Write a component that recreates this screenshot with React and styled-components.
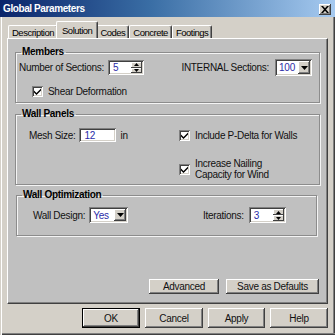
import React from "react";
import styled, { createGlobalStyle } from "styled-components";

const GlobalStyle = createGlobalStyle`
  html, body {
    margin: 0;
    padding: 0;
    background: #d4d0c8;
  }
  * {
    box-sizing: border-box;
  }
`;

const sunken = `
  box-shadow: inset 1px 1px #808080, inset -1px -1px #ffffff,
    inset 2px 2px #404040, inset -2px -2px #d4d0c8;
`;

const raised = `
  box-shadow: inset -1px -1px #404040, inset 1px 1px #ffffff,
    inset -2px -2px #808080, inset 2px 2px #d4d0c8;
`;

function App() {
  return (
    <Window>
      <GlobalStyle />
      <TitleBar>
        <h1>Global Parameters</h1>
        <CloseButton>
          <svg width="8" height="7" viewBox="0 0 8 7">
            <path d="M0 0h2l2 2.3L6 0h2L5 3.5 8 7H6L4 4.7 2 7H0l3-3.5z" fill="#000" />
          </svg>
        </CloseButton>
      </TitleBar>

      <Body>
        <TabStrip>
          <Tab>Description</Tab>
          <Tab $active>Solution</Tab>
          <Tab>Codes</Tab>
          <Tab>Concrete</Tab>
          <Tab>Footings</Tab>
        </TabStrip>

        <Panel>
          <Group $height={57}>
            <legend>Members</legend>
            <MembersRow>
              <Field>
                <Label>Number of Sections:</Label>
                <Spinner value="5" width={36} />
              </Field>
              <Field $gap={6}>
                <Label>INTERNAL Sections:</Label>
                <Combo value="100" width={37} height={17} />
              </Field>
            </MembersRow>
            <CheckRow $indent={13}>
              <CheckBox />
              <Label>Shear Deformation</Label>
            </CheckRow>
          </Group>

          <Group $height={77} $top={5}>
            <legend>Wall Panels</legend>
            <PanelsGrid>
              <Field>
                <Label>Mesh Size:</Label>
                <TextInput>12</TextInput>
                <Label>in</Label>
              </Field>
              <CheckList>
                <CheckRow>
                  <CheckBox />
                  <Label>Include P-Delta for Walls</Label>
                </CheckRow>
                <CheckRow>
                  <CheckBox />
                  <Label>
                    Increase Nailing
                    <br />
                    Capacity for Wind
                  </Label>
                </CheckRow>
              </CheckList>
            </PanelsGrid>
          </Group>

          <Group $height={47} $top={4} $right={3} $left={1}>
            <legend>Wall Optimization</legend>
            <OptGrid>
              <Field $gap={4}>
                <Label>Wall Design:</Label>
                <Combo value="Yes" width={39} height={16} />
              </Field>
              <Field $gap={5}>
                <Label>Iterations:</Label>
                <Spinner value="3" width={37} height={16} />
              </Field>
            </OptGrid>
          </Group>

          <PanelButtons>
            <Button $width={70} $height={15}>Advanced</Button>
            <Button $width={93} $height={15}>Save as Defaults</Button>
          </PanelButtons>
        </Panel>

        <DialogButtons>
          <Button $width={58} $height={20} $default>OK</Button>
          <Button $width={58} $height={20}>Cancel</Button>
          <Button $width={57} $height={20}>Apply</Button>
          <Button $width={58} $height={20}>Help</Button>
        </DialogButtons>
      </Body>
    </Window>
  );
}

function Spinner({ value, width, height = 15 }) {
  return (
    <SpinBox style={{ width, height }}>
      <span>{value}</span>
      <SpinButtons>
        <SpinArrow>
          <svg width="5" height="3" viewBox="0 0 5 3">
            <path d="M2.5 0L5 3H0z" fill="#000" />
          </svg>
        </SpinArrow>
        <SpinArrow>
          <svg width="5" height="3" viewBox="0 0 5 3">
            <path d="M0 0h5L2.5 3z" fill="#000" />
          </svg>
        </SpinArrow>
      </SpinButtons>
    </SpinBox>
  );
}

function Combo({ value, width, height }) {
  return (
    <ComboBox style={{ width, height }}>
      <span>{value}</span>
      <DropButton>
        <svg width="7" height="4" viewBox="0 0 7 4">
          <path d="M0 0h7L3.5 4z" fill="#000" />
        </svg>
      </DropButton>
    </ComboBox>
  );
}

function CheckBox() {
  return (
    <Check>
      <svg width="7" height="7" viewBox="0 0 7 7">
        <path d="M0 2.5l2.5 2.5L7 0.5v2L2.5 7 0 4.5z" fill="#000" />
      </svg>
    </Check>
  );
}

const Window = styled.div`
  width: 335px;
  height: 335px;
  display: flex;
  flex-direction: column;
  background: #d4d0c8;
  font-family: "Liberation Sans", Arial, sans-serif;
  color: #000;
  overflow: hidden;
  box-shadow: inset 1px 0 #d4d0c8, inset 2px 0 #ffffff, inset 0 -1px #404040,
    inset 0 -2px #808080, inset -1px 0 #404040, inset -2px 0 #808080;
`;

const TitleBar = styled.div`
  height: 17px;
  flex: none;
  display: flex;
  align-items: center;
  justify-content: space-between;
  padding: 0 4px 0 3px;
  background: linear-gradient(90deg, #0a246a 0%, #3a6ea5 45%, #a6caf0 100%);

  h1 {
    margin: 0;
    font-size: 10px;
    font-weight: bold;
    letter-spacing: -0.4px;
    color: #ffffff;
  }
`;

const CloseButton = styled.div`
  width: 12px;
  height: 11px;
  margin-top: 1px;
  display: flex;
  align-items: center;
  justify-content: center;
  background: #d4d0c8;
  ${raised}
`;

const Body = styled.div`
  flex: 1;
  display: flex;
  flex-direction: column;
  padding: 5px 7px 0 7px;
`;

const TabStrip = styled.div`
  display: flex;
  align-items: flex-end;
  height: 16px;
  padding-left: 1px;
  position: relative;
  z-index: 1;
`;

const Tab = styled.div`
  height: ${(p) => (p.$active ? "17px" : "13px")};
  margin: ${(p) => (p.$active ? "0 -2px" : "0")};
  padding: ${(p) => (p.$active ? "1px 5px 0" : "0 3px")};
  display: flex;
  align-items: center;
  font-size: 9.5px;
  letter-spacing: -0.5px;
  background: #d4d0c8;
  border-top: 1px solid #ffffff;
  border-left: 1px solid #ffffff;
  border-right: 1px solid #404040;
  box-shadow: inset -1px 0 #808080;
  border-radius: 2px 2px 0 0;
  position: relative;
  z-index: ${(p) => (p.$active ? 2 : 0)};
`;

const Panel = styled.div`
  height: 266px;
  flex: none;
  display: flex;
  flex-direction: column;
  padding: 7px 7px 9px 7px;
  background: #c0c0c0;
  border-top: 1px solid #ffffff;
  border-left: 1px solid #ffffff;
  border-right: 1px solid #404040;
  border-bottom: 1px solid #404040;
  box-shadow: inset -1px -1px #808080;
`;

const Group = styled.fieldset`
  margin: ${(p) => p.$top || 0}px ${(p) => p.$right || 0}px 0 ${(p) => p.$left || 0}px;
  height: ${(p) => p.$height}px;
  padding: 0 7px 0 3px;
  min-width: 0;
  border: 1px solid #8c8c8c;
  box-shadow: 1px 1px #f4f4f4, inset 1px 1px #f4f4f4;

  legend {
    padding: 0 2px 0 1px;
    margin-left: 2px;
    font-size: 10px;
    line-height: 12px;
    font-weight: bold;
    letter-spacing: -0.3px;
  }
`;

const Label = styled.span`
  font-size: 10px;
  line-height: 11px;
  letter-spacing: -0.3px;
  white-space: nowrap;
  color: #111;
`;

const Field = styled.div`
  display: flex;
  align-items: center;
  gap: ${(p) => p.$gap ?? 4}px;
`;

const MembersRow = styled.div`
  display: flex;
  justify-content: space-between;
  align-items: center;
  margin-top: 1px;
  height: 17px;
`;

const CheckRow = styled.div`
  display: flex;
  align-items: center;
  gap: 5px;
  margin-top: ${(p) => (p.$indent ? "10px" : "0")};
  margin-left: ${(p) => p.$indent || 0}px;
`;

const PanelsGrid = styled.div`
  display: grid;
  grid-template-columns: 150px 1fr;
  align-items: start;
  padding: 8px 0 0 10px;
`;

const CheckList = styled.div`
  display: flex;
  flex-direction: column;
  gap: 17px;
  padding-top: 2px;
`;

const OptGrid = styled.div`
  display: grid;
  grid-template-columns: 170px auto;
  align-items: center;
  padding: 6px 0 0 13px;
`;

const fieldText = `
  background: #ffffff;
  color: #2b2ba8;
  font-size: 10px;
  letter-spacing: -0.2px;
  display: flex;
  align-items: center;
`;

const TextInput = styled.div`
  ${fieldText}
  ${sunken}
  width: 37px;
  height: 14px;
  padding-left: 5px;
`;

const SpinBox = styled.div`
  ${fieldText}
  ${sunken}
  padding: 2px 2px 2px 5px;
  justify-content: space-between;

  span {
    line-height: 11px;
  }
`;

const SpinButtons = styled.div`
  width: 11px;
  height: 100%;
  display: flex;
  flex-direction: column;
`;

const SpinArrow = styled.div`
  flex: 1;
  display: flex;
  align-items: center;
  justify-content: center;
  background: #d4d0c8;
  box-shadow: inset -1px -1px #404040, inset 1px 1px #ffffff;
`;

const ComboBox = styled.div`
  ${fieldText}
  ${sunken}
  padding: 2px 2px 2px 4px;
  justify-content: space-between;
`;

const DropButton = styled.div`
  width: 12px;
  height: 100%;
  display: flex;
  align-items: center;
  justify-content: center;
  background: #d4d0c8;
  ${raised}
`;

const Check = styled.div`
  width: 11px;
  height: 11px;
  flex: none;
  display: flex;
  align-items: center;
  justify-content: center;
  background: #ffffff;
  ${sunken}
`;

const PanelButtons = styled.div`
  margin-top: auto;
  display: flex;
  justify-content: flex-end;
  gap: 7px;
  padding-right: 1px;
`;

const Button = styled.div`
  width: ${(p) => p.$width}px;
  height: ${(p) => p.$height}px;
  display: flex;
  align-items: center;
  justify-content: center;
  font-size: 10px;
  letter-spacing: -0.3px;
  color: #111;
  background: #d4d0c8;
  ${raised}
  ${(p) =>
    p.$default &&
    `
    box-shadow: inset 0 0 0 1px #000, inset -2px -2px #404040, inset 2px 2px #ffffff,
      inset -3px -3px #808080;
  `}
`;

const DialogButtons = styled.div`
  display: flex;
  justify-content: flex-end;
  gap: 5px;
  margin-top: 4px;
`;

export default App;
